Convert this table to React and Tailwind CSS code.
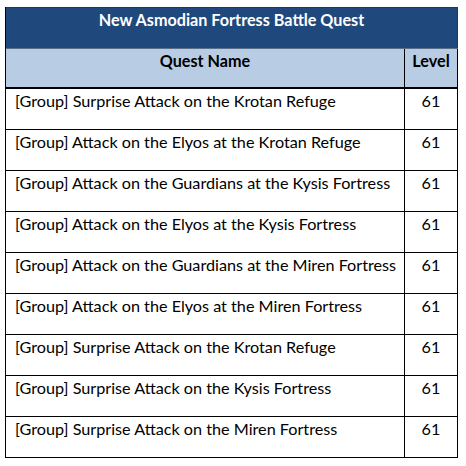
const quests = [
  '[Group] Surprise Attack on the Krotan Refuge',
  '[Group] Attack on the Elyos at the Krotan Refuge',
  '[Group] Attack on the Guardians at the Kysis Fortress',
  '[Group] Attack on the Elyos at the Kysis Fortress',
  '[Group] Attack on the Guardians at the Miren Fortress',
  '[Group] Attack on the Elyos at the Miren Fortress',
  '[Group] Surprise Attack on the Krotan Refuge',
  '[Group] Surprise Attack on the Kysis Fortress',
  '[Group] Surprise Attack on the Miren Fortress',
];

const App = () => {
  return (
    <div className="w-[466px] h-[466px] bg-white pt-[7px] pl-[5px] font-['Lato',sans-serif] text-[16.2px] leading-[22px] text-black">
      <div className="w-[453px] border-l border-black">
        <div className="h-[41px] bg-[#1f497d] border-t border-r border-[#1a3a66] text-white font-bold text-center pt-[1px]">
          New Asmodian Fortress Battle Quest
        </div>
        <div className="grid grid-cols-[399px_1fr] h-[41px] bg-[#b8cce4] border-t border-[#5a6f8a] border-b-2 border-b-black font-bold">
          <div className="text-center pt-[1px] border-r border-black">Quest Name</div>
          <div className="text-center pt-[1px] border-r border-black">Level</div>
        </div>
        {quests.map((q, i) => (
          <div key={i} className="grid grid-cols-[399px_1fr] h-[41px] border-b border-black">
            <div className="pl-[9px] pt-[1px] border-r border-black whitespace-nowrap">{q}</div>
            <div className="text-center pt-[1px] border-r border-black">61</div>
          </div>
        ))}
      </div>
    </div>
  );
};

export default App;
